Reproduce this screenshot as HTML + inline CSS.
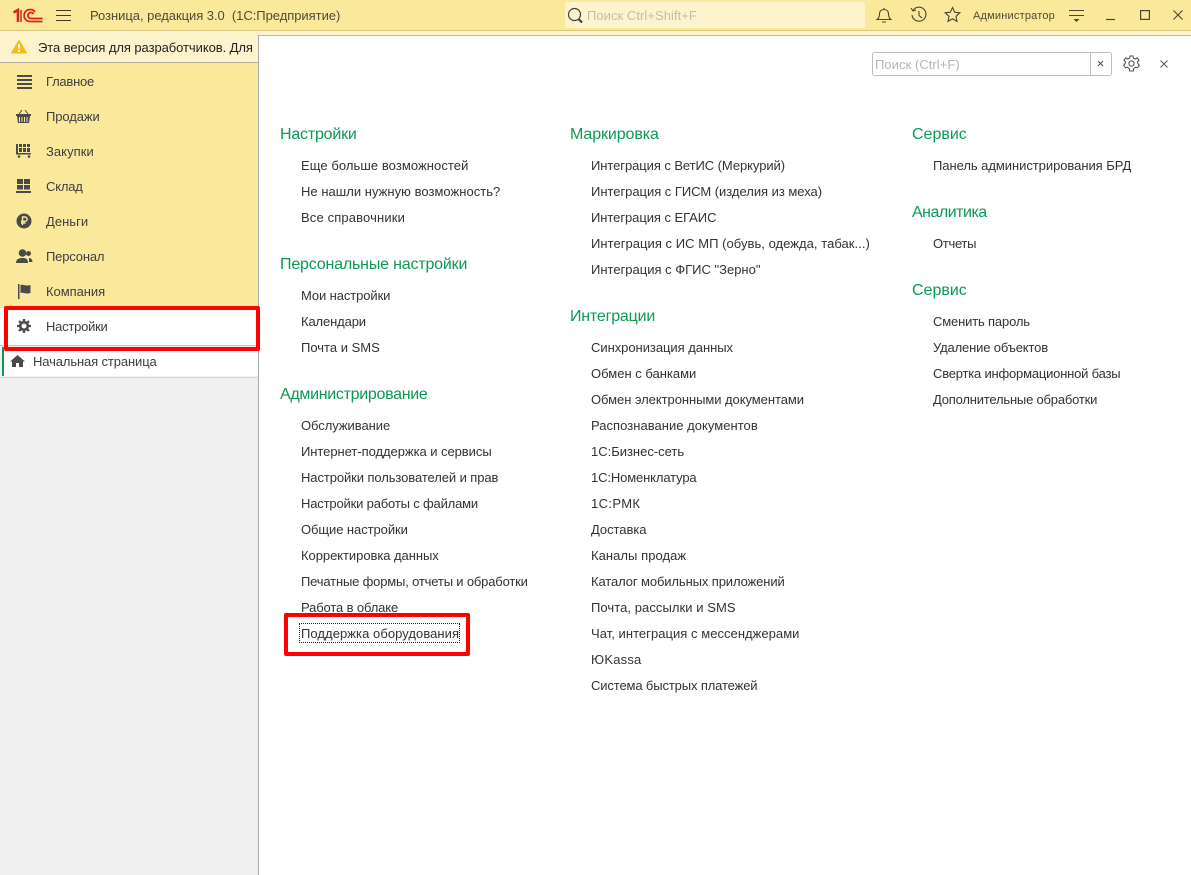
<!DOCTYPE html>
<html lang="ru"><head><meta charset="utf-8"><title>Розница</title>
<style>
html,body{margin:0;padding:0;width:1191px;height:875px;overflow:hidden;background:#f0f0f0}
body{position:relative;font-family:"Liberation Sans",Arial,sans-serif;font-size:13px;color:#333}
div,span,svg{position:absolute}
.t{white-space:nowrap;line-height:16px}
.h{white-space:nowrap;line-height:20px;font-size:16px;color:#0a9a54}
.s{white-space:nowrap;line-height:16px;color:#3d3d3d}
svg.i{fill:#4a4a4a}
</style></head><body>
<div style="left:0;top:0;width:1191px;height:30px;background:#fbe99b"></div>
<div style="left:0;top:30px;width:1191px;height:1px;background:#d9c77e"></div>
<div style="left:0;top:31px;width:1191px;height:31px;background:#fdf4cd"></div>
<div style="left:0;top:62px;width:258px;height:1px;background:#b5b09a"></div>
<div style="left:0;top:63px;width:258px;height:245px;background:#fbe99b"></div>
<div style="left:0;top:308px;width:258px;height:37px;background:#fff"></div>
<div style="left:0;top:345px;width:258px;height:1px;background:#c9c2a8"></div>
<div style="left:2px;top:347px;width:256px;height:29px;background:#fff"></div>
<div style="left:2px;top:347px;width:2px;height:29px;background:#0a9a54"></div>
<div style="left:0;top:377px;width:258px;height:1px;background:#d8d8d8"></div>

<svg style="left:13px;top:8px" width="30" height="16" viewBox="0 0 30 16"><path d="M.5 4.500L5 2V14" fill="none" stroke="#d9251c" stroke-width="2.600"/><path d="M8 14V2" stroke="#d9251c" stroke-width="1.500"/><path d="M22 4A6 6 0 1 0 17 13.500H29.500M20.500 6A3 3 0 1 0 17.500 10.500H29.500" fill="none" stroke="#d9251c" stroke-width="1.800"/></svg>
<svg style="left:56px;top:9px" width="15" height="13"><path d="M0 1.500H15M0 6.500H15M0 11.500H15" stroke="#3f3c2e" stroke-width="1"/></svg>
<div class="t" style="left:90px;top:8px;color:#4d4a3a;letter-spacing:-.04px">Розница, редакция 3.0&nbsp; (1С:Предприятие)</div>

<div style="left:565px;top:2px;width:300px;height:26px;background:#fdf4cd;border-radius:2px"></div>
<svg style="left:567px;top:7px" width="17" height="17" fill="none" stroke="#3f3f3f"><circle cx="7.500" cy="7.500" r="6" stroke-width="1.200"/><path d="M11.500 12L15 15.500" stroke-width="2"/></svg>
<div class="t" style="left:587px;top:8px;color:#c3bea5;font-size:13px;letter-spacing:.05px">Поиск Ctrl+Shift+F</div>

<svg style="left:876px;top:7px" width="16" height="17" fill="none" stroke="#4a4636" stroke-width="1.100"><path d="M1 12.500C3 11 3.500 9 3.500 7C3.500 4 5.500 2.500 8 2.500C10.500 2.500 12.500 4 12.500 7C12.500 9 13 11 15 12.500ZM6 15H10M8 1V2.500"/></svg>
<svg style="left:910px;top:6px" width="18" height="18" fill="none" stroke="#4a4636" stroke-width="1.100"><path d="M3 4.500A7 7 0 1 1 2 9M1 2L3 5L6 4M9 5V9.500L12 12"/></svg>
<svg style="left:944px;top:6px" width="17" height="17" fill="none" stroke="#4a4636" stroke-width="1.100"><path d="M8.500 1.500L10.700 6.200L15.800 6.800L12 10.300L13 15.400L8.500 12.800L4 15.400L5 10.300L1.200 6.800L6.300 6.200Z"/></svg>
<div class="t" style="left:973px;top:8px;color:#4d4a3a;font-size:11px;letter-spacing:.2px">Администратор</div>
<svg style="left:1069px;top:9px" width="15" height="14"><path d="M0 1.500H15M0 6.500H15" stroke="#4a4636" stroke-width="1"/><path d="M4.500 10H10.500L7.500 13Z" fill="#4a4636"/></svg>
<svg style="left:1106px;top:18px" width="10" height="3"><path d="M0 1.500H9" stroke="#4a4636" stroke-width="1.200"/></svg>
<svg style="left:1140px;top:10px" width="10" height="10" fill="none"><rect x=".6" y=".6" width="8.800" height="8.800" stroke="#4a4636" stroke-width="1.200"/></svg>
<svg style="left:1173px;top:10px" width="10" height="10"><path d="M.5 .5L9.500 9.500M9.500 .5L.5 9.500" stroke="#4a4636" stroke-width="1.100"/></svg>

<svg style="left:11px;top:39px" width="16" height="15"><path d="M8 1L15.500 14H.5Z" fill="#f6bd16" stroke="#f6bd16" stroke-linejoin="round"/><path d="M8 5V9.800M8 11V13" stroke="#fff" stroke-width="1.800"/></svg>
<div class="t" style="left:38px;top:40px;color:#222;letter-spacing:-.07px">Эта версия для разработчиков. Для</div>

<svg class="i" style="left:17px;top:75px" width="15" height="14"><path d="M0 0H15V2H0ZM0 4H15V6H0ZM0 8H15V10H0ZM0 12H15V14H0Z"/></svg>
<div class="s" style="left:46px;top:74px;letter-spacing:-.23px">Главное</div>
<svg class="i" style="left:16px;top:110px" width="16" height="14"><path d="M0 4H15V6H14L13 13H2L1 6H0ZM3 7V12H4V7ZM5.500 7V12H6.500V7ZM8 7V12H9V7ZM10.500 7V12H11.500V7Z" fill-rule="evenodd"/><path d="M3 4L6 0M12 4L9 0" stroke="#4a4a4a" fill="none"/></svg>
<div class="s" style="left:46px;top:109px;letter-spacing:-.08px">Продажи</div>
<svg class="i" style="left:16px;top:144px" width="16" height="14"><path d="M0 0H2V9H15V10.500H0ZM3 0H6V3H3ZM7 0H10V3H7ZM11 0H14V3H11ZM3 4H6V8H3ZM7 4H10V8H7ZM11 4H14V8H11Z"/><circle cx="3" cy="12.500" r="1.300"/><circle cx="13" cy="12.500" r="1.300"/></svg>
<div class="s" style="left:46px;top:144px;letter-spacing:.05px">Закупки</div>
<svg class="i" style="left:16px;top:179px" width="16" height="14"><path d="M1 0H7V5H1ZM8 0H14V5H8ZM1 6H7V10.500H1ZM8 6H14V10.500H8ZM0 12H15V14H0Z"/></svg>
<div class="s" style="left:46px;top:179px;letter-spacing:-.2px">Склад</div>
<svg style="left:16px;top:213px" width="16" height="16"><circle cx="8" cy="8" r="7.500" fill="#4a4a4a"/><path d="M6.500 12V4H9A2.100 2.100 0 0 1 9 8.300H5M5 10H9.500" fill="none" stroke="#fbe99b" stroke-width="1.400"/></svg>
<div class="s" style="left:46px;top:214px;letter-spacing:.03px">Деньги</div>
<svg class="i" style="left:16px;top:249px" width="17" height="14"><circle cx="6.500" cy="4" r="3.800"/><path d="M0 14C0 10 3 9 6.500 9C10 9 12 10 12 14Z"/><circle cx="12.500" cy="4.500" r="2.500"/><path d="M13 9C15 9 16.500 10.500 16.500 13H13Z"/></svg>
<div class="s" style="left:46px;top:249px;letter-spacing:-.17px">Персонал</div>
<svg class="i" style="left:18px;top:284px" width="13" height="15"><path d="M0 0H1.500V15H0ZM2.500 1C5.500 0 7.500 2.500 12.500 1V9C7.500 10.500 5.500 8 2.500 9Z"/></svg>
<div class="s" style="left:46px;top:284px;letter-spacing:-.05px">Компания</div>
<svg style="left:17px;top:319px" width="14" height="14" viewBox="0 0 14 14"><circle cx="7" cy="7" r="3.800" fill="none" stroke="#4a4a4a" stroke-width="2.600"/><path d="M7 0V3M7 11V14M0 7H3M11 7H14M2 2L4 4M10 10L12 12M12 2L10 4M4 10L2 12" stroke="#4a4a4a" stroke-width="2.200"/></svg>
<div class="s" style="left:46px;top:319px;letter-spacing:-.24px">Настройки</div>
<svg class="i" style="left:10px;top:355px" width="15" height="12"><path d="M7.500 0L15 6.500H13V12H9V8H6V12H2V6.500H0Z"/></svg>
<div class="s" style="left:33px;top:354px;letter-spacing:-.12px">Начальная страница</div>

<div style="left:258px;top:35px;width:933px;height:840px;background:#fff;border-top:1px solid #b9b9b9;border-left:1px solid #a9a9a9;box-sizing:border-box"></div>
<div style="left:4px;top:306px;width:256px;height:45px;border:4px solid #f00;box-sizing:border-box;border-radius:2px"></div>

<div style="left:872px;top:52px;width:240px;height:24px;border:1px solid #bcbcbc;border-radius:3px;box-sizing:border-box;background:#fff"></div>
<div style="left:1090px;top:53px;width:1px;height:22px;background:#bcbcbc"></div>
<div class="t" style="left:875px;top:57px;color:#b5b5b5;font-size:13px;letter-spacing:.05px">Поиск (Ctrl+F)</div>
<svg style="left:1097px;top:60px" width="7" height="7"><path d="M1 1L6 6M6 1L1 6" stroke="#555" stroke-width="1.100"/></svg>
<svg style="left:1123px;top:55px" width="17" height="17" fill="none" stroke="#4a4a4a" stroke-width="1"><circle cx="8.500" cy="8.500" r="2.600"/><path d="M7 1H10L10.400 3.200L12.200 4L14.100 2.800L16 5.200L14.500 6.800L14.800 8.500L16.300 10.300L14.600 12.800L12.500 12.300L10.800 13.500L10.300 16H6.700L6.200 13.500L4.500 12.300L2.400 12.800L.7 10.300L2.200 8.500L2.500 6.800L1 5.200L2.900 2.800L4.800 4L6.600 3.200Z"/></svg>
<svg style="left:1160px;top:60px" width="8" height="8"><path d="M.5 .5L7.500 7.500M7.500 .5L.5 7.500" stroke="#555" stroke-width="1"/></svg>

<div class="h" style="left:280px;top:125px;letter-spacing:-.2px">Настройки</div>
<div class="t" style="left:301px;top:158px;letter-spacing:.07px">Еще больше возможностей</div>
<div class="t" style="left:301px;top:184px;letter-spacing:.03px">Не нашли нужную возможность?</div>
<div class="t" style="left:301px;top:210px;letter-spacing:.14px">Все справочники</div>
<div class="h" style="left:280px;top:255px;letter-spacing:-.18px">Персональные настройки</div>
<div class="t" style="left:301px;top:288px;letter-spacing:-.1px">Мои настройки</div>
<div class="t" style="left:301px;top:314px;letter-spacing:-.13px">Календари</div>
<div class="t" style="left:301px;top:340px">Почта и SMS</div>
<div class="h" style="left:280px;top:385px;letter-spacing:-.3px">Администрирование</div>
<div class="t" style="left:301px;top:418px;letter-spacing:-.05px">Обслуживание</div>
<div class="t" style="left:301px;top:444px;letter-spacing:-.05px">Интернет-поддержка и сервисы</div>
<div class="t" style="left:301px;top:470px;letter-spacing:-.09px">Настройки пользователей и прав</div>
<div class="t" style="left:301px;top:496px;letter-spacing:-.17px">Настройки работы с файлами</div>
<div class="t" style="left:301px;top:522px;letter-spacing:-.07px">Общие настройки</div>
<div class="t" style="left:301px;top:548px;letter-spacing:-.05px">Корректировка данных</div>
<div class="t" style="left:301px;top:574px;letter-spacing:-.17px">Печатные формы, отчеты и обработки</div>
<div class="t" style="left:301px;top:600px;letter-spacing:-.13px">Работа в облаке</div>
<div class="t" style="left:301px;top:626px;letter-spacing:.06px">Поддержка оборудования</div>
<div style="left:299px;top:623px;width:161px;height:20px;border:1px dotted #222;box-sizing:border-box"></div>
<div style="left:284px;top:613px;width:186px;height:43px;border:4px solid #f00;box-sizing:border-box;border-radius:2px"></div>

<div class="h" style="left:570px;top:125px;letter-spacing:-.1px">Маркировка</div>
<div class="t" style="left:591px;top:158px;letter-spacing:-.07px">Интеграция с ВетИС (Меркурий)</div>
<div class="t" style="left:591px;top:184px;letter-spacing:-.03px">Интеграция с ГИСМ (изделия из меха)</div>
<div class="t" style="left:591px;top:210px;letter-spacing:-.06px">Интеграция с ЕГАИС</div>
<div class="t" style="left:591px;top:236px;letter-spacing:.04px">Интеграция с ИС МП (обувь, одежда, табак...)</div>
<div class="t" style="left:591px;top:262px">Интеграция с ФГИС "Зерно"</div>
<div class="h" style="left:570px;top:307px;letter-spacing:-.2px">Интеграции</div>
<div class="t" style="left:591px;top:340px;letter-spacing:-.04px">Синхронизация данных</div>
<div class="t" style="left:591px;top:366px">Обмен с банками</div>
<div class="t" style="left:591px;top:392px;letter-spacing:-.06px">Обмен электронными документами</div>
<div class="t" style="left:591px;top:418px;letter-spacing:.03px">Распознавание документов</div>
<div class="t" style="left:591px;top:444px;letter-spacing:-.01px">1С:Бизнес-сеть</div>
<div class="t" style="left:591px;top:470px;letter-spacing:-.13px">1С:Номенклатура</div>
<div class="t" style="left:591px;top:496px;letter-spacing:.37px">1С:РМК</div>
<div class="t" style="left:591px;top:522px;letter-spacing:-.05px">Доставка</div>
<div class="t" style="left:591px;top:548px;letter-spacing:.05px">Каналы продаж</div>
<div class="t" style="left:591px;top:574px;letter-spacing:-.11px">Каталог мобильных приложений</div>
<div class="t" style="left:591px;top:600px;letter-spacing:.06px">Почта, рассылки и SMS</div>
<div class="t" style="left:591px;top:626px;letter-spacing:.04px">Чат, интеграция с мессенджерами</div>
<div class="t" style="left:591px;top:652px;letter-spacing:.2px">ЮKassa</div>
<div class="t" style="left:591px;top:678px;letter-spacing:-.13px">Система быстрых платежей</div>

<div class="h" style="left:912px;top:125px">Сервис</div>
<div class="t" style="left:933px;top:158px;letter-spacing:-.05px">Панель администрирования БРД</div>
<div class="h" style="left:912px;top:203px;letter-spacing:-.5px">Аналитика</div>
<div class="t" style="left:933px;top:236px;letter-spacing:-.3px">Отчеты</div>
<div class="h" style="left:912px;top:281px">Сервис</div>
<div class="t" style="left:933px;top:314px;letter-spacing:-.16px">Сменить пароль</div>
<div class="t" style="left:933px;top:340px;letter-spacing:-.15px">Удаление объектов</div>
<div class="t" style="left:933px;top:366px;letter-spacing:-.2px">Свертка информационной базы</div>
<div class="t" style="left:933px;top:392px;letter-spacing:-.2px">Дополнительные обработки</div>
</body></html>
